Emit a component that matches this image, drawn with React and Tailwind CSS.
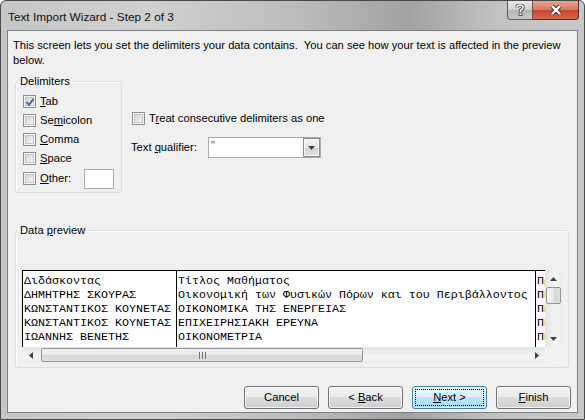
import React from 'react';

const ui = "font-['Liberation_Sans',Arial,sans-serif]";
const mono = "font-['Liberation_Mono','Courier_New',monospace]";

function Check({ checked }) {
  return (
    <span className="relative w-[13px] h-[13px] shrink-0 border border-[#8e8f8f] bg-[#f6f6f6] p-[1px] flex">
      <span className="flex-1 border border-[#c3c6cb] bg-[linear-gradient(135deg,#d2d5da,#f7f7f7)]" />
      {checked && (
        <svg className="absolute left-[1px] top-[1px]" width="10" height="10" viewBox="0 0 10 10">
          <path d="M1.5 5.2 L4 7.8 L8.6 1.8" fill="none" stroke="#45609c" strokeWidth="1.9" />
        </svg>
      )}
    </span>
  );
}

function Row({ children, checked, className = 'h-[19px]' }) {
  return (
    <div className={`flex items-center gap-[4px] ${className}`}>
      <Check checked={checked} />
      {children}
    </div>
  );
}

function Arrow({ dir }) {
  const d = {
    up: 'M0 4 L3.5 0 L7 4 Z',
    down: 'M0 0 L7 0 L3.5 4 Z',
    left: 'M4 0 L4 7 L0 3.5 Z',
    right: 'M0 0 L4 3.5 L0 7 Z',
  }[dir];
  const horiz = dir === 'left' || dir === 'right';
  return (
    <svg width={horiz ? 4 : 7} height={horiz ? 7 : 4} viewBox={horiz ? '0 0 4 7' : '0 0 7 4'}>
      <path d={d} fill="#404040" />
    </svg>
  );
}

function Btn({ children, primary }) {
  return (
    <div
      className={`relative w-[75px] h-[23px] rounded-[3px] border flex items-center justify-center shadow-[inset_0_0_0_1px_rgba(255,255,255,0.75)] ${
        primary
          ? 'border-[#3c7fb1] bg-[linear-gradient(#eaf6fd_0%,#d9f0fc_45%,#bee6fd_50%,#a7d9f5_100%)]'
          : 'border-[#707070] bg-[linear-gradient(#f2f2f2_0%,#ebebeb_45%,#dddddd_50%,#cfcfcf_100%)]'
      }`}
    >
      {primary && <span className="absolute inset-[2px] border border-dotted border-black" />}
      <span>{children}</span>
    </div>
  );
}

const col1 = ['Διδάσκοντας', 'ΔΗΜΗΤΡΗΣ ΣΚΟΥΡΑΣ', 'ΚΩΝΣΤΑΝΤΙΚΟΣ ΚΟΥΝΕΤΑΣ', 'ΚΩΝΣΤΑΝΤΙΚΟΣ ΚΟΥΝΕΤΑΣ', 'ΙΩΑΝΝΗΣ ΒΕΝΕΤΗΣ'];
const col2 = [
  'Τίτλος Μαθήματος',
  'Οικονομική των Φυσικών Πόρων και του Περιβάλλοντος',
  'ΟΙΚΟΝΟΜΙΚΑ ΤΗΣ ΕΝΕΡΓΕΙΑΣ',
  'ΕΠΙΧΕΙΡΗΣΙΑΚΗ ΕΡΕΥΝΑ',
  'ΟΙΚΟΝΟΜΕΤΡΙΑ',
];
const col3 = ['Πρόγραμμα', 'ΠΡΟΠΤΥΧΙΑΚΟ', 'ΠΡΟΠΤΥΧΙΑΚΟ', 'ΠΡΟΠΤΥΧΙΑΚΟ', 'ΠΡΟΠΤΥΧΙΑΚΟ'];

function Col({ rows, className }) {
  return (
    <div className={`shrink-0 pl-[1px] pt-[3px] overflow-hidden ${className}`}>
      {rows.map((r, i) => (
        <div key={i} className="h-[14px] leading-[14px] whitespace-nowrap">{r}</div>
      ))}
    </div>
  );
}

export default function App() {
  return (
    <div className={`w-[585px] h-[420px] overflow-hidden text-[11.2px] text-black ${ui}`}>
      <div className="w-full h-full flex flex-col border border-[#4a4a4a] rounded-t-[6px] bg-[linear-gradient(90deg,#c6c6c6_0%,#d0d0d0_25%,#bdbdbd_50%,#a2a2a2_70%,#c2c2c2_85%,#c8c8c8_100%)]">
        {/* title bar */}
        <div className="h-[29px] flex shrink-0">
          <div className="pl-[7px] pt-[8px] text-[11.8px] text-[#111]">Text Import Wizard - Step 2 of 3</div>
          <div className="ml-auto mr-[5px] flex h-[19px]">
            <div className="w-[26px] h-full border border-[#5b5b5b] border-t-0 rounded-bl-[4px] bg-[linear-gradient(#e9e9e9,#cfcfcf_50%,#b4b4b4_51%,#c9c9c9)] flex items-center justify-center">
              <svg width="10" height="12" viewBox="0 0 10 12">
                <path d="M2 3.5 Q2 1 5 1 Q8 1 8 3.5 Q8 5.2 5.5 6.2 L5.5 8" fill="none" stroke="#3a3a3a" strokeWidth="3.2" />
                <path d="M2 3.5 Q2 1 5 1 Q8 1 8 3.5 Q8 5.2 5.5 6.2 L5.5 8" fill="none" stroke="#fff" strokeWidth="1.6" />
                <rect x="4" y="9" width="3" height="2.6" fill="#fff" stroke="#3a3a3a" strokeWidth="0.8" />
              </svg>
            </div>
            <div className="w-[46px] h-full border border-l-0 border-t-0 border-[#5b2a22] rounded-br-[4px] bg-[linear-gradient(#e8a493,#d9785f_50%,#c4462b_51%,#d46b4f)] flex items-center justify-center">
              <svg width="14" height="12" viewBox="0 0 14 12">
                <path d="M3 2 L11 10 M11 2 L3 10" stroke="#3b3b3b" strokeWidth="4.2" />
                <path d="M3 2 L11 10 M11 2 L3 10" stroke="#fff" strokeWidth="2.4" />
              </svg>
            </div>
          </div>
        </div>

        {/* client */}
        <div className="flex-1 mx-[6px] mb-[6px] border border-[#7d8086] bg-[#f0f0f0] flex flex-col">
          <div className="pl-[5px] pt-[7px] leading-[15px] whitespace-nowrap">
            This screen lets you set the delimiters your data contains.&nbsp; You can see how your text is affected in the preview
            <br />
            below.
          </div>

          <div className="flex items-start mt-[6px]">
            <fieldset className="ml-[7px] w-[107px] border border-[#d5dfe5] rounded-[3px] px-[2px] pb-[3px] shadow-[inset_1px_1px_0_#fff]">
              <legend className="px-[2px] leading-[15px]">Delimiters</legend>
              <div className="pl-[5px] pt-[3px]">
                <Row checked>
                  <span><u>T</u>ab</span>
                </Row>
                <Row>
                  <span>Se<u>m</u>icolon</span>
                </Row>
                <Row>
                  <span><u>C</u>omma</span>
                </Row>
                <Row>
                  <span><u>S</u>pace</span>
                </Row>
                <Row className="h-[21px]">
                  <span><u>O</u>ther:</span>
                  <span className="ml-[9px] w-[30px] h-[20px] border border-[#abadb3] bg-white" />
                </Row>
              </div>
            </fieldset>

            <div className="ml-[9px] pt-[35px]">
              <div className="pl-[1px]">
                <Row>
                  <span>T<u>r</u>eat consecutive delimiters as one</span>
                </Row>
              </div>
              <div className="flex items-center mt-[9px]">
                <span className="w-[77px] shrink-0">Text <u>q</u>ualifier:</span>
                <div className="w-[113px] h-[21px] border border-[#abadb3] bg-white flex">
                  <span className="flex-1 pl-[2px] leading-[15px] text-[#7a4a1a]">"</span>
                  <span className="w-[17px] h-full border border-[#8a8a8a] bg-[linear-gradient(#f4f4f4,#e6e6e6_50%,#d4d4d4_51%,#dcdcdc)] shadow-[inset_0_0_0_1px_#fafafa] flex items-center justify-center">
                    <Arrow dir="down" />
                  </span>
                </div>
              </div>
            </div>
          </div>

          <fieldset className="ml-[7px] mt-[30px] w-[554px] border border-[#d5dfe5] rounded-[3px] px-[2px] pb-[4px] shadow-[inset_1px_1px_0_#fff]">
            <legend className="px-[2px] leading-[15px]">Data <u>p</u>review</legend>
            <div className="pl-[4px] pt-[32px]">
              <div className="w-[540px] flex flex-col">
                <div className="flex h-[77px]">
                  <div className={`w-[523px] border-t border-l border-black bg-white flex overflow-hidden text-[11.67px] ${mono}`}>
                    <Col rows={col1} className="w-[154px] border-r border-black" />
                    <Col rows={col2} className="w-[359px] border-r border-black" />
                    <Col rows={col3} className="w-[9px]" />
                  </div>
                  <div className="w-[17px] h-full flex flex-col items-center bg-[linear-gradient(90deg,#e4e4e4,#f4f4f4_60%,#ececec)]">
                    <div className="h-[17px] flex items-center justify-center"><Arrow dir="up" /></div>
                    <div className="w-[15px] h-[17px] rounded-[2px] border border-[#959595] bg-[linear-gradient(90deg,#f3f3f3,#e8e8e8_50%,#d6d6d6_51%,#e0e0e0)]" />
                    <div className="flex-1" />
                    <div className="h-[17px] flex items-center justify-center"><Arrow dir="down" /></div>
                  </div>
                </div>
                <div className="flex h-[16px]">
                  <div className="w-[523px] h-full flex items-center bg-[linear-gradient(#e4e4e4,#f4f4f4_60%,#ececec)]">
                    <div className="w-[17px] flex items-center justify-center"><Arrow dir="left" /></div>
                    <div className="ml-[2px] w-[322px] h-[14px] rounded-[2px] border border-[#959595] bg-[linear-gradient(#f3f3f3,#e8e8e8_50%,#d6d6d6_51%,#e0e0e0)] flex items-center justify-center">
                      <svg width="7" height="7" viewBox="0 0 7 7">
                        <path d="M0.5 0 V7 M3.5 0 V7 M6.5 0 V7" stroke="#6f6f6f" strokeWidth="1" />
                      </svg>
                    </div>
                    <div className="flex-1" />
                    <div className="w-[17px] flex items-center justify-center"><Arrow dir="right" /></div>
                  </div>
                  <div className="w-[17px] h-full bg-[#f0f0f0]" />
                </div>
              </div>
            </div>
          </fieldset>

          <div className="mt-auto pb-[3px] pr-[6px] flex justify-end gap-[9px]">
            <Btn>Cancel</Btn>
            <Btn>&lt; <u>B</u>ack</Btn>
            <Btn primary><u>N</u>ext &gt;</Btn>
            <Btn><u>F</u>inish</Btn>
          </div>
        </div>
      </div>
    </div>
  );
}
